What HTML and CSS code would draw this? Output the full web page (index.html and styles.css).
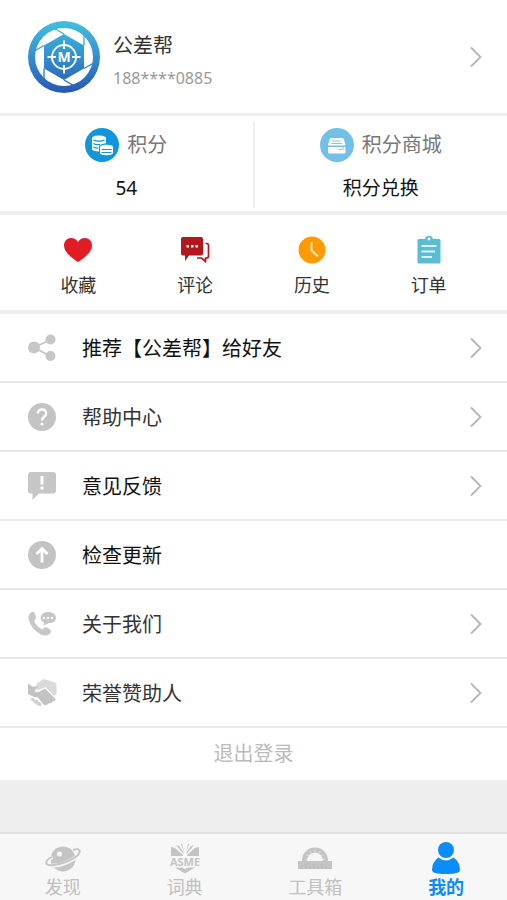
FILE: index.html
```
<!DOCTYPE html>
<html lang="zh-CN">
    <head>
        <meta charset="UTF-8">
        <meta name="viewport" content="width=device-width, initial-scale=1">
        <title>我的</title>
        <link rel="stylesheet" href="styles.css">
    </head>
    <body>
        <svg class="sprite" aria-hidden="true">
            <symbol id="arrow" viewBox="0 0 14 22">
                <path d="M2 1.500L11.500 11L2 20.500" fill="none" stroke="#b5b5b5" stroke-width="1.800"/>
            </symbol>
        </svg>

        <main class="content">
            <a class="profile" href="#">
                <svg class="avatar" viewBox="0 0 72 72">
                    <defs>
                        <linearGradient id="blue" gradientUnits="userSpaceOnUse" x1="36" y1="0" x2="36" y2="72">
                            <stop offset="0" stop-color="#43bfdf"/>
                            <stop offset="0.5" stop-color="#338fd0"/>
                            <stop offset="1" stop-color="#2856b2"/>
                        </linearGradient>
                    </defs>
                    <circle cx="36" cy="36" r="36" fill="url(#blue)"/>
                    <circle cx="36" cy="36" r="29" fill="#fff"/>
                    <path d="M36 13L56 24.500V47.500L36 59L16 47.500V24.500Z" fill="url(#blue)"/>
                    <path d="M36 13L23 5.500M56 24.500V9.500M56 47.500L69 40M36 59L49 66.500M16 47.500V62.500M16 24.500L3 32" stroke="url(#blue)" stroke-width="1.300"/>
                    <circle cx="36" cy="36" r="12" fill="none" stroke="#fff" stroke-width="1.800"/>
                    <path d="M36 19.500V28M36 44V52.500M19.500 36H28M44 36H52.500" stroke="#fff" stroke-width="2"/>
                    <text class="avatar-letter" x="36" y="41" text-anchor="middle">M</text>
                </svg>
                <span class="profile-text">
                    <span class="name">公差帮</span>
                    <span class="phone">188****0885</span>
                </span>
                <svg class="arrow"><use href="#arrow"/></svg>
            </a>

            <section class="points">
                <a class="points-item" href="#">
                    <span class="points-title">
                        <svg class="points-icon" viewBox="0 0 34 34">
                            <circle cx="17" cy="17" r="17" fill="#1296db"/>
                            <path d="M7 10C7 6.500 21 6.500 21 10V15.500C17 15.500 14 17 14 19V23.500C10 23.500 7 22.500 7 21Z" fill="#fff"/>
                            <path d="M8.500 12C11 13.500 17 13.500 19.500 12M8.500 15.500C10 16.500 13 16.700 15 16.300M8.500 19C10 20 11.500 20.200 13 20.200" fill="none" stroke="#1296db" stroke-width="1.300"/>
                            <path d="M15 19C15 16 28 16 28 19V25C28 28 15 28 15 25Z" fill="#fff"/>
                            <path d="M16.500 21.500H26.500M16.500 24.500H26.500" stroke="#1296db" stroke-width="1.200"/>
                        </svg>
                        积分
                    </span>
                    <span class="points-value">54</span>
                </a>
                <a class="points-item" href="#">
                    <span class="points-title">
                        <svg class="points-icon" viewBox="0 0 34 34">
                            <circle cx="17" cy="17" r="17" fill="#72bfe8"/>
                            <path d="M11 10H22Q23.500 10 24 11.500L25.500 17.500H8L9.500 11.500Q10 10 11 10Z" fill="#fff"/>
                            <path d="M8 19H25.500V24Q25.500 25.500 24 25.500H9.500Q8 25.500 8 24Z" fill="#fff"/>
                            <path d="M12 13H20.500M11.500 15.500H22M19 21.500H22M23 19V22" stroke="#72bfe8" stroke-width="0.900"/>
                        </svg>
                        积分商城
                    </span>
                    <span class="points-value">积分兑换</span>
                </a>
            </section>

            <nav class="shortcuts">
                <a class="shortcut" href="#">
                    <svg class="shortcut-icon" viewBox="0 0 30 30">
                        <path d="M15 27C11 24.500 1 18 1 10.500C1 2 11.500 0.500 15 7C18.500 0.500 29 2 29 10.500C29 18 19 24.500 15 27Z" fill="#e31b23"/>
                    </svg>
                    收藏
                </a>
                <a class="shortcut" href="#">
                    <svg class="shortcut-icon" viewBox="0 0 30 30">
                        <path d="M3 2H21Q23 2 23 4V18.500Q23 20.500 21 20.500H9L5 26V20.500H3Q1 20.500 1 18.500V4Q1 2 3 2Z" fill="#b5161b"/>
                        <path d="M25.500 8.500H26.500Q28.500 8.500 28.500 10.500V21Q28.500 23 26.500 23H25.500V26.500L21.500 23H17" fill="none" stroke="#b5161b" stroke-width="1.700"/>
                        <path d="M6.500 10h2.500v2.500h-2.500zM11 10h2.500v2.500h-2.500zM15.500 10h2.500v2.500h-2.500z" fill="#fff"/>
                    </svg>
                    评论
                </a>
                <a class="shortcut" href="#">
                    <svg class="shortcut-icon" viewBox="0 0 30 30">
                        <circle cx="15" cy="15" r="13.500" fill="#ff9a00"/>
                        <path d="M14.500 7V15.500L21 21.500" fill="none" stroke="#ffe9c4" stroke-width="2"/>
                    </svg>
                    历史
                </a>
                <a class="shortcut" href="#">
                    <svg class="shortcut-icon" viewBox="0 0 30 30">
                        <path d="M5 4H11C11 -0.500 19 -0.500 19 4H25Q26.500 4 26.500 5.500V27Q26.500 28.500 25 28.500H5Q3.500 28.500 3.500 27V5.500Q3.500 4 5 4Z" fill="#5bbdd1"/>
                        <circle cx="15" cy="4" r="1.400" fill="#fff"/>
                        <path d="M7.500 11H22.500M7.500 16.500H21M7.500 22H18" stroke="#d8f2f7" stroke-width="2"/>
                    </svg>
                    订单
                </a>
            </nav>

            <nav class="menu">
                <a class="menu-item dark" href="#">
                    <svg class="menu-icon" viewBox="0 0 28 28">
                        <path d="M23 5.500L6 13.500L23 22.500" fill="none" stroke="#c6c6c6" stroke-width="1.800"/>
                        <circle cx="22.500" cy="5.500" r="5" fill="#c6c6c6"/>
                        <circle cx="6" cy="13.500" r="6" fill="#c6c6c6"/>
                        <circle cx="22.500" cy="22" r="5" fill="#c6c6c6"/>
                    </svg>
                    推荐【公差帮】给好友
                    <svg class="arrow"><use href="#arrow"/></svg>
                </a>
                <a class="menu-item" href="#">
                    <svg class="menu-icon" viewBox="0 0 28 28">
                        <circle cx="14" cy="14" r="14" fill="#c3c3c3"/>
                        <path d="M9.800 10.500C9.800 5 18.200 5 18.200 10.500C18.200 13.500 14 13.500 14 17.500" fill="none" stroke="#fff" stroke-width="2.500"/>
                        <circle cx="14" cy="21" r="1.600" fill="#fff"/>
                    </svg>
                    帮助中心
                    <svg class="arrow"><use href="#arrow"/></svg>
                </a>
                <a class="menu-item dark" href="#">
                    <svg class="menu-icon" viewBox="0 0 28 28">
                        <path d="M3 0H25Q28 0 28 3V18.500Q28 21.500 25 21.500H11L4.500 28V21.500H3Q0 21.500 0 18.500V3Q0 0 3 0Z" fill="#c6c6c6"/>
                        <path d="M14 4V12.500M14 14.500V17.500" stroke="#fff" stroke-width="3"/>
                    </svg>
                    意见反馈
                    <svg class="arrow"><use href="#arrow"/></svg>
                </a>
                <a class="menu-item dark" href="#">
                    <svg class="menu-icon" viewBox="0 0 28 28">
                        <circle cx="14" cy="14" r="14" fill="#c3c3c3"/>
                        <path d="M14 21.500V8.500M8.500 13L14 7.500L19.500 13" fill="none" stroke="#fff" stroke-width="2.800"/>
                    </svg>
                    检查更新
                </a>
                <a class="menu-item" href="#">
                    <svg class="menu-icon" viewBox="0 0 28 28">
                        <path d="M3 2.500Q5 1 6.500 3L8 6.500Q8.500 8.500 6 10.500Q7.500 16 14.500 19.500Q16.500 16.500 19 17.500L22 19.500Q24 21.500 21.500 24Q18 27 12 24Q3 18.500 0.500 9Q0 4.500 3 2.500Z" fill="#c6c6c6"/>
                        <path d="M20 2C25 2 28 4.500 28 8C28 11 25 13 21 13L15.500 15.500L16 12.500C10 9.500 12.500 2 20 2Z" fill="#c6c6c6"/>
                        <path d="M15 7h2v2h-2zM19 7h2v2h-2zM23 7h2v2h-2z" fill="#fff"/>
                    </svg>
                    关于我们
                    <svg class="arrow"><use href="#arrow"/></svg>
                </a>
                <a class="menu-item" href="#">
                    <svg class="menu-icon" viewBox="0 0 28 28">
                        <path d="M9 4L16 0L27 3.500Q29 4 28.500 8V15L26 17L17.500 8L11 11L7.500 10Z" fill="#dadada"/>
                        <path d="M0 4.500L4.500 7.500H10.500L6.500 11.500Q8 14 11.500 12.500L17 9.500L27.500 20Q27.500 22 24.500 22.500Q23.500 25 20.500 24.500Q18.500 27.500 15.500 25.500L10 18.500L6 18L0 15Z" fill="#c3c3c3"/>
                        <path d="M2 20L5 18.500L7 21L9.500 20.500L10.500 23L13.500 24L13 27.500L9 26Z" fill="#d0d0d0"/>
                    </svg>
                    荣誉赞助人
                    <svg class="arrow"><use href="#arrow"/></svg>
                </a>
            </nav>

            <button class="logout" type="button">退出登录</button>
        </main>

        <nav class="tabs">
            <a class="tab" href="#">
                <svg class="tab-icon" viewBox="0 0 36 32">
                    <circle cx="18" cy="17" r="12.500" fill="#c4c4c4"/>
                    <path d="M7.500 15C-1 19 -1 25 9 23.500C16 23.500 27 19 32 14.500C38 8 33 6 28 8.500" fill="none" stroke="#f7f7f7" stroke-width="3.800"/>
                    <path d="M7 15C-1 19 -1 24.500 9 23C16 22.500 27 18 32 14C38 8 33 6 28 8" fill="none" stroke="#c4c4c4" stroke-width="1.900"/>
                    <circle cx="14.500" cy="12" r="2.500" fill="#f7f7f7"/>
                </svg>
                发现
            </a>
            <a class="tab" href="#">
                <svg class="tab-icon" viewBox="0 0 36 32">
                    <path d="M4 5L8 6L16 13V14H4ZM32 5L28 6L20 13V14H32ZM9 3L12 4L16.500 10V12ZM27 3L24 4L19.500 10V12ZM13.500 1.500L15 2L17 9ZM22.500 1.500L21 2L19 9Z" fill="#c4c4c4"/>
                    <path d="M8 25.500H15L18 27L21 25.500H28L18 31.500Z" fill="#c4c4c4"/>
                    <text class="tab-word" x="18" y="24" text-anchor="middle">ASME</text>
                </svg>
                词典
            </a>
            <a class="tab" href="#">
                <svg class="tab-icon" viewBox="0 0 36 32">
                    <path d="M5 19C5 1 31 1 31 19H26C26 8 10 8 10 19Z" fill="#c4c4c4"/>
                    <path d="M8 17L11 18M9 12.500L12 14.500M13 9L14.500 12M18 7.500V11M23 9L21.500 12M27 12.500L24 14.500M28 17L25 18" stroke="#dedede" stroke-width="1"/>
                    <path d="M1 19H35V27H1Z" fill="#c4c4c4"/>
                    <path d="M5 23V27M9 22V27M13 23V27M17 22V27M21 23V27M25 22V27M29 23V27" stroke="#b4b4b4" stroke-width="1"/>
                </svg>
                工具箱
            </a>
            <a class="tab active" href="#">
                <svg class="tab-icon" viewBox="0 0 36 32">
                    <circle cx="18" cy="8" r="8" fill="#0a8dfa"/>
                    <path d="M10.500 15.500Q18 21.500 25.500 15.500Q32 20 32 28Q32 32 18 32Q4 32 4 28Q4 20 10.500 15.500Z" fill="#0a8dfa"/>
                </svg>
                我的
            </a>
        </nav>
    </body>
</html>
```
FILE: styles.css
```
*{
    box-sizing: border-box;
}
body{
    margin: 0;
    min-height: 100vh;
    display: flex;
    flex-direction: column;
    background-color: #eeeeee;
    color: #333333;
    font-family: "Noto Sans", "Noto Sans CJK SC", sans-serif;
    font-size: 20px;
}
a{
    color: inherit;
    text-decoration: none;
}
svg{
    display: block;
    flex-shrink: 0;
}
.sprite{
    position: absolute;
    width: 0;
    height: 0;
}
.content{
    flex: 1;
}
.arrow{
    width: 14px;
    height: 22px;
    margin-left: auto;
}

/* user */
.profile{
    display: flex;
    align-items: center;
    gap: 13px;
    padding: 19px 24px 18px 28px;
    background-color: white;
    border-bottom: 3px solid #eeeeee;
}
.avatar{
    width: 72px;
    height: 72px;
}
.avatar-letter{
    fill: white;
    font-family: "Noto Sans", sans-serif;
    font-size: 14px;
    font-weight: bold;
}
.profile-text{
    display: flex;
    flex-direction: column;
    padding-top: 10px;
    line-height: 33px;
}
.phone{
    color: #999999;
    font-size: 16px;
}

/* points */
.points{
    display: flex;
    padding: 6px 0 3px;
    background-color: white;
    border-bottom: 4px solid #eeeeee;
}
.points-item{
    flex: 1;
    display: flex;
    flex-direction: column;
    align-items: center;
    gap: 12px;
    padding: 5px 0 7px;
}
.points-item + .points-item{
    border-left: 2px solid #eeeeee;
}
.points-title{
    display: flex;
    align-items: center;
    gap: 8px;
    line-height: 36px;
    color: #777777;
}
.points-icon{
    width: 34px;
    height: 34px;
}
.points-value{
    color: #111111;
    font-size: 19px;
    line-height: 26px;
}

/* shortcuts */
.shortcuts{
    display: flex;
    padding: 20px 20px 13px;
    background-color: white;
    border-bottom: 4px solid #eeeeee;
}
.shortcut{
    flex: 1;
    display: flex;
    flex-direction: column;
    align-items: center;
    gap: 8px;
    font-size: 18px;
    line-height: 24px;
}
.shortcut-icon{
    width: 30px;
    height: 30px;
}

/* menu */
.menu-item{
    display: flex;
    align-items: center;
    height: 69px;
    padding: 0 24px 0 28px;
    background-color: white;
    border-bottom: 2px solid #e8e8e8;
}
.menu-icon{
    width: 28px;
    height: 28px;
    margin-right: 26px;
    overflow: visible;
}
.dark{
    color: #111111;
}
.logout{
    display: block;
    width: 100%;
    padding: 12px 0;
    border: none;
    background-color: white;
    color: #bbbbbb;
    font-family: inherit;
    font-size: 20px;
    line-height: 28px;
    cursor: pointer;
}

/* bottom tabs */
.tabs{
    position: sticky;
    bottom: 0;
    display: flex;
    justify-content: space-around;
    padding: 8px 0 2px 2px;
    background-color: #f7f7f7;
    border-top: 2px solid #e2e2e2;
}
.tab{
    display: flex;
    flex-direction: column;
    align-items: center;
    gap: 2px;
    color: #c0c0c0;
    font-size: 18px;
    line-height: 22px;
}
.tab-icon{
    width: 36px;
    height: 32px;
}
.tab-word{
    fill: #c4c4c4;
    font-family: "Noto Sans", sans-serif;
    font-size: 11px;
    font-weight: bold;
}
.active{
    color: #0a8dfa;
    font-weight: bold;
}
```
